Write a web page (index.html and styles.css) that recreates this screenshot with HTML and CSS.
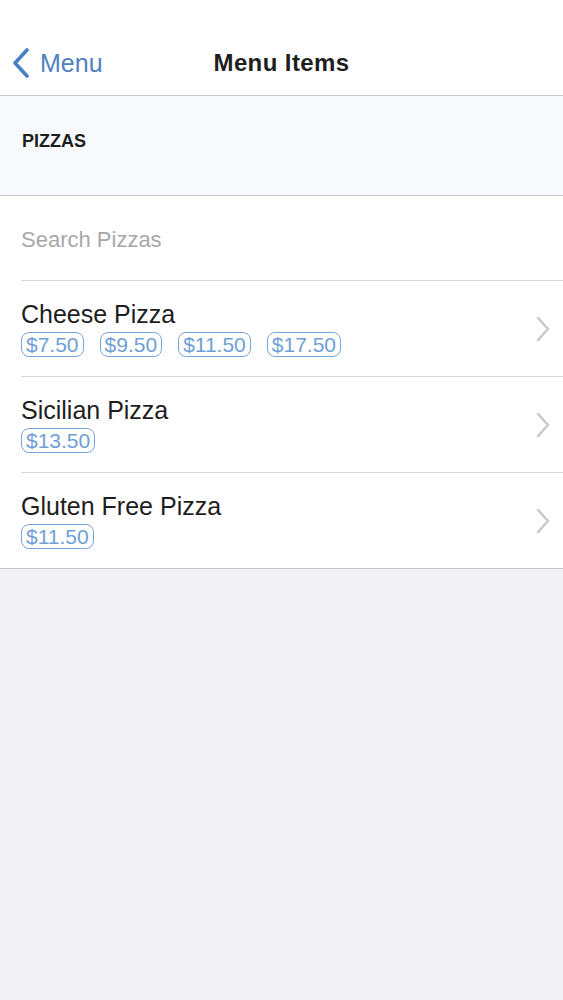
FILE: index.html
```html
<!DOCTYPE html>
<html>
<head>
<meta charset="utf-8">
<link rel="stylesheet" href="styles.css">
</head>
<body>
<div class="screen">
  <header class="nav">
    <div class="nav-bar">
      <a class="back">
        <svg class="back-icon" width="20" height="30" viewBox="0 0 20 30"><path d="M16 2 L4 15 L16 28" fill="none" stroke="#4a7fc2" stroke-width="3.6" stroke-linecap="round" stroke-linejoin="round"/></svg>
        <span class="back-text">Menu</span>
      </a>
      <h1 class="title">Menu Items</h1>
      <span></span>
    </div>
  </header>
  <section class="section-head">
    <span class="section-title">PIZZAS</span>
  </section>
  <ul class="list">
    <li class="search-row"><span class="search-placeholder">Search Pizzas</span></li>
    <li class="item">
      <div class="item-body">
        <div class="item-name">Cheese Pizza</div>
        <div class="prices">
          <span class="price">$7.50</span>
          <span class="price">$9.50</span>
          <span class="price">$11.50</span>
          <span class="price">$17.50</span>
        </div>
      </div>
      <svg class="chev" width="14" height="26" viewBox="0 0 14 26"><path d="M2 2 L12 13 L2 24" fill="none" stroke="#c7c7cc" stroke-width="2.4" stroke-linecap="round" stroke-linejoin="round"/></svg>
    </li>
    <li class="item">
      <div class="item-body">
        <div class="item-name">Sicilian Pizza</div>
        <div class="prices">
          <span class="price">$13.50</span>
        </div>
      </div>
      <svg class="chev" width="14" height="26" viewBox="0 0 14 26"><path d="M2 2 L12 13 L2 24" fill="none" stroke="#c7c7cc" stroke-width="2.4" stroke-linecap="round" stroke-linejoin="round"/></svg>
    </li>
    <li class="item last">
      <div class="item-body">
        <div class="item-name">Gluten Free Pizza</div>
        <div class="prices">
          <span class="price">$11.50</span>
        </div>
      </div>
      <svg class="chev" width="14" height="26" viewBox="0 0 14 26"><path d="M2 2 L12 13 L2 24" fill="none" stroke="#c7c7cc" stroke-width="2.4" stroke-linecap="round" stroke-linejoin="round"/></svg>
    </li>
  </ul>
</div>
</body>
</html>
```
FILE: styles.css
```css
* { box-sizing: border-box; }
html, body { margin: 0; padding: 0; }
body {
  font-family: "Liberation Sans", Arial, sans-serif;
  background: #f2f2f5;
  color: #1a1a1a;
}
.screen { width: 563px; min-height: 1000px; background: #f2f2f5; }
.nav {
  background: #fff;
  padding-top: 40px;
  height: 96px;
  border-bottom: 1px solid #c8c8cc;
}
.nav-bar {
  display: grid;
  grid-template-columns: 1fr auto 1fr;
  align-items: center;
  height: 46px;
}
.back {
  display: flex;
  align-items: center;
  padding-left: 11px;
  color: #4f80c2;
  gap: 9px;
}
.back-icon { display: block; }
.back-text { font-size: 25px; line-height: 30px; }
.title {
  margin: 0;
  font-size: 24px;
  font-weight: bold;
  letter-spacing: 0.4px;
  color: #1e1e1e;
  line-height: 30px;
}
.section-head {
  background: #f7f9fc;
  height: 100px;
  border-bottom: 1px solid #c8c8cc;
  display: flex;
  align-items: center;
  padding-left: 22px;
  padding-bottom: 9px;
}
.section-title {
  font-size: 18px;
  font-weight: bold;
  color: #1e1e1e;
}
.list {
  list-style: none;
  margin: 0;
  padding: 0 0 0 21px;
  background: #fff;
  border-bottom: 1px solid #c8c8cc;
}
.search-row {
  height: 85px;
  border-bottom: 1px solid #d8d8dc;
  display: flex;
  align-items: center;
  padding-top: 4px;
}
.search-placeholder {
  font-size: 22px;
  color: #a8a8ac;
}
.item {
  display: flex;
  align-items: center;
  justify-content: space-between;
  height: 96px;
  border-bottom: 1px solid #d8d8dc;
  padding-right: 13px;
}
.item.last { border-bottom: none; height: 95px; }
.item-body { display: flex; flex-direction: column; gap: 4px; padding-top: 0; }
.item-name {
  font-size: 25px;
  line-height: 28px;
  color: #1e1e1e;
}
.prices { display: flex; gap: 16px; }
.price {
  font-size: 21px;
  line-height: 22px;
  color: #6f9fd6;
  border: 1.5px solid #7aa5d8;
  border-radius: 8px;
  padding: 0 4px;
  height: 25px;
  display: flex;
  align-items: center;
}
.chev { display: block; }
```
